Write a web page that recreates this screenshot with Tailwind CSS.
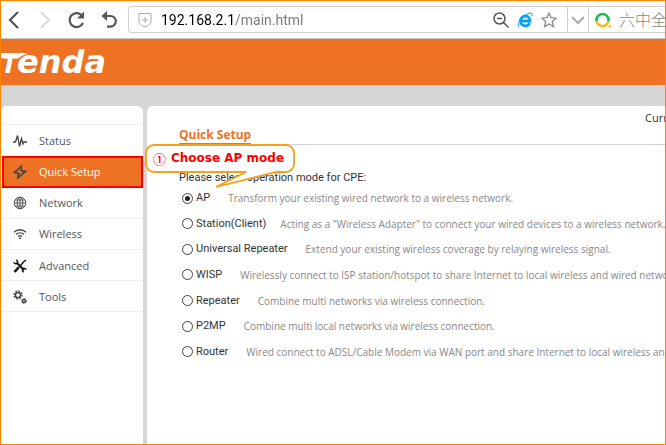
<!DOCTYPE html>
<html lang="en">
<head>
  <meta charset="UTF-8">
  <meta name="viewport" content="width=device-width, initial-scale=1.0">
  <title>Tenda - Quick Setup</title>
  <script src="https://cdn.jsdelivr.net/npm/@tailwindcss/browser@4"></script>
</head>
<body class="min-h-screen flex flex-col overflow-hidden border border-[#ff8400] bg-white font-['Open_Sans','Noto_Sans_CJK_SC',sans-serif] text-[#333]">

  <!-- Browser toolbar -->
  <div class="flex items-center h-[38px] shrink-0 overflow-hidden border-b border-[#c8c8c8] bg-white">
    <div class="flex items-center gap-[11px] pl-1 pr-2.5 shrink-0 text-[#555]">
      <button type="button" aria-label="Back">
        <svg class="size-5" viewBox="0 0 20 20" fill="none" stroke="currentColor" stroke-width="2.2"><path d="M13 2 5 10l8 8"/></svg>
      </button>
      <button type="button" aria-label="Forward" class="text-[#ddd]">
        <svg class="size-5" viewBox="0 0 20 20" fill="none" stroke="currentColor" stroke-width="2.2"><path d="M5 2l8 8-8 8"/></svg>
      </button>
      <button type="button" aria-label="Reload">
        <svg class="size-5" viewBox="0 0 20 20" fill="none" stroke="currentColor" stroke-width="2.2"><path d="M16 13A7 7 0 1 1 14.500 5"/><path d="M17 1.500v7h-7z" fill="currentColor" stroke="none"/></svg>
      </button>
      <button type="button" aria-label="Undo">
        <svg class="size-5" viewBox="0 0 20 20" fill="none" stroke="currentColor" stroke-width="2.2"><path d="M5 6h7.500a5.300 5.300 0 0 1 0 10.600H9"/><path d="M9 1v10L3.500 6z" fill="currentColor" stroke="none"/></svg>
      </button>
    </div>
    <div class="flex flex-1 min-w-0 items-center h-[27px] border border-r-0 border-[#d0d0d0] rounded-l-sm">
      <svg class="size-4 ml-2 shrink-0" viewBox="0 0 16 16" fill="none" stroke="#aaa"><path d="M2 1.500h12V9c0 3-3 5-6 6-3-1-6-3-6-6z"/><path d="M8 5v6M5 8h6"/></svg>
      <input type="text" aria-label="Address" value="192.168.2.1/main.html" class="flex-1 min-w-0 ml-2 text-sm font-['Roboto'] outline-none bg-[linear-gradient(90deg,#000_74px,#777_74px)] bg-clip-text text-transparent">
      <div class="flex items-center gap-2 pr-2.5 shrink-0">
        <button type="button" aria-label="Zoom out">
          <svg class="size-4" viewBox="0 0 16 16" fill="none" stroke="#555" stroke-width="1.5"><circle cx="6.500" cy="6.500" r="5.500"/><path d="M10.500 10.500l5 5M4 6.500h5"/></svg>
        </button>
        <button type="button" aria-label="Compatibility mode">
          <svg class="size-4" viewBox="0 0 16 16" fill="none" stroke="#0ba0ee"><path d="M3.500 9H13c0-3-2-5-4.700-5S3.500 6.200 3.500 9s2 4.800 4.800 4.800c2 0 3.600-.9 4.300-2.800" stroke-width="2.8"/><path d="M2.500 15C0 14 2 7.500 7 4c3.500-2.600 7.500-4 8-2.300.2.800 0 1.800-.4 2.500" stroke-width="1"/></svg>
        </button>
        <button type="button" aria-label="Bookmark">
          <svg class="size-4" viewBox="0 0 16 16" fill="none" stroke="#888" stroke-width="1.3"><path d="M8 1l2.100 4.700 5 .5-3.800 3.400 1.200 5.100L8 12l-4.500 2.700 1.200-5.100L.9 6.200l5-.5z"/></svg>
        </button>
      </div>
      <button type="button" aria-label="History" class="flex items-center justify-center w-[22px] h-full shrink-0 border-x border-[#d0d0d0]">
        <svg class="size-3" viewBox="0 0 12 12" fill="none" stroke="#aaa" stroke-width="2"><path d="M0 3l6 6 6-6"/></svg>
      </button>
      <div class="flex items-center w-[76px] shrink-0 gap-2 pl-1.5 overflow-hidden">
        <svg class="size-4 shrink-0" viewBox="0 0 16 16" fill="none" stroke-width="2.6"><path d="M1.700 9.500a6 6 0 1 1 11.600 0" stroke="#19b955"/><path d="M1.700 9.500a6 6 0 0 0 11.600 0" stroke="#fdb813"/><circle cx="14.800" cy="14.300" r="1.200" fill="#fdb813"/></svg>
        <span class="text-base leading-6 font-light whitespace-nowrap text-[#888]">六中全</span>
      </div>
    </div>
  </div>

  <!-- Logo bar -->
  <header class="flex items-center h-[46px] shrink-0 bg-[#ee7223] overflow-hidden">
    <a href="#" class="relative flex items-baseline text-white leading-none font-bold italic font-['DejaVu_Sans']">
      <svg class="absolute left-0 top-[7px] w-7 h-2" viewBox="0 0 28 8" fill="#fff"><path d="M0 0h22l5 1c-4 .5-7 2-9 4H0z"/></svg>
      <span class="w-4 text-2xl leading-none">T</span><span class="text-[32px] leading-none">enda</span>
    </a>
  </header>

  <div class="flex flex-1 gap-1 pt-[21px] bg-[#d6d6d6] overflow-hidden">
    <!-- Sidebar -->
    <nav class="w-[142px] shrink-0 bg-white rounded-t-md text-[11px] leading-4 text-[#555]">
      <div class="h-[19px] border-b border-[#eee]"></div>
      <a href="#" class="flex items-center gap-3 h-[31px] pl-3 pt-0.5 border-b border-[#eee]">
        <svg class="size-3.5" viewBox="0 0 14 14" fill="none" stroke="#444" stroke-width="1.3"><path d="M0 8h2.500L4.500 1.500l2 11 2-8L10 10l1-2h3"/></svg>
        Status
      </a>
      <a href="#" aria-current="page" class="flex items-center gap-3 h-8 ml-px pl-[9px] border-2 border-[#f00] bg-[#ee7223] text-white">
        <svg class="size-3.5" viewBox="0 0 14 14" fill="none" stroke="#444" stroke-width="1.7"><path d="M8.500 1L1.500 7.500l4.200.8-1 4.700L12.500 6.300 8 5.500z"/></svg>
        Quick Setup
      </a>
      <a href="#" class="flex items-center gap-3 h-[31px] pl-3 border-b border-[#eee]">
        <svg class="size-3.5" viewBox="0 0 14 14" fill="none" stroke="#555"><circle cx="7" cy="7" r="5.800"/><ellipse cx="7" cy="7" rx="2.800" ry="5.800"/><path d="M7 1v12M1 7h12M2 4h10M2 10h10"/></svg>
        Network
      </a>
      <a href="#" class="flex items-center gap-3 h-[31px] pl-3 border-b border-[#eee]">
        <svg class="size-3.5" viewBox="0 0 14 14" fill="none" stroke="#444" stroke-width="1.3"><path d="M1 5.200c3.500-3.300 8.500-3.300 12 0M3 7.500c2.300-2.200 5.700-2.200 8 0M5 9.600c1.200-1.100 2.800-1.100 4 0"/><circle cx="7" cy="11.300" r="1" fill="#444" stroke="none"/></svg>
        Wireless
      </a>
      <a href="#" class="flex items-center gap-3 h-[31px] pl-3 pt-0.5 border-b border-[#eee]">
        <svg class="size-3.5" viewBox="0 0 14 14" fill="none" stroke="#111"><path d="M3.500 3.500l7.500 7.500" stroke-width="2"/><path d="M.8 3.200c.6 1.600 2.500 2 3.400.8.9-1 .3-2.600-1-3.200M13.200 10.800c-.6-1.600-2.500-2-3.400-.8-.9 1-.3 2.600 1 3.200" stroke-width="1.4"/><path d="M13 1l-2.500 2L7.500 6.500" stroke-width="1.4"/><path d="M6 8l-4.500 5" stroke-width="2.6"/></svg>
        Advanced
      </a>
      <a href="#" class="flex items-center gap-3 h-[31px] pl-3 pt-0.5 border-b border-[#eee]">
        <svg class="size-3.5" viewBox="0 0 14 14" fill="none" stroke="#444"><circle cx="5" cy="5" r="2.600" stroke-width="1.5"/><circle cx="5" cy="5" r="4" stroke-width="1.4" stroke-dasharray="1.600 1.540"/><circle cx="11" cy="11" r="1.500" stroke-width="1.4"/><circle cx="11" cy="11" r="2.500" stroke-width="1" stroke-dasharray="1 .96"/></svg>
        Tools
      </a>
    </nav>

    <!-- Main panel -->
    <main class="flex-1 min-w-0 pl-8 bg-white rounded-tl-md overflow-hidden whitespace-nowrap">
      <div class="flex justify-end h-5 pt-1 overflow-hidden text-[11px] leading-4">
        <span class="w-5">Curr</span>
      </div>
      <div class="flex border-b border-[#d0d0d0]">
        <h1 class="-mb-px border-b-2 border-[#ee7223] text-xs leading-[17px] font-bold text-[#ee7223]">Quick Setup</h1>
      </div>

      <form class="font-['Roboto'] text-[11px] leading-5">
        <fieldset>
          <legend class="pt-[23px]">Please select operation mode for CPE:</legend>
          <div class="flex flex-col justify-between h-[174px] pl-[3px]">
            <div class="flex items-center">
              <label class="flex items-center gap-[3px] mr-[18px]">
                <input type="radio" name="mode" value="ap" checked class="appearance-none size-[11px] rounded-full border border-[#444] p-0.5 bg-clip-content checked:bg-[#222]">AP
              </label>
              <span class="font-['Open_Sans'] text-[10px] text-[#888]">Transform your existing wired network to a wireless network.</span>
            </div>
            <div class="flex items-center">
              <label class="flex items-center gap-[3px] mr-[14px]">
                <input type="radio" name="mode" value="station" class="appearance-none size-[11px] rounded-full border border-[#444] p-0.5 bg-clip-content checked:bg-[#222]">Station(Client)
              </label>
              <span class="font-['Open_Sans'] text-[10px] text-[#888]">Acting as a "Wireless Adapter" to connect your wired devices to a wireless network.</span>
            </div>
            <div class="flex items-center">
              <label class="flex items-center gap-[3px] mr-[18px]">
                <input type="radio" name="mode" value="universal" class="appearance-none size-[11px] rounded-full border border-[#444] p-0.5 bg-clip-content checked:bg-[#222]">Universal Repeater
              </label>
              <span class="font-['Open_Sans'] text-[10px] text-[#888]">Extend your existing wireless coverage by relaying wireless signal.</span>
            </div>
            <div class="flex items-center">
              <label class="flex items-center gap-[3px] mr-[18px]">
                <input type="radio" name="mode" value="wisp" class="appearance-none size-[11px] rounded-full border border-[#444] p-0.5 bg-clip-content checked:bg-[#222]">WISP
              </label>
              <span class="font-['Open_Sans'] text-[10px] text-[#888]">Wirelessly connect to ISP station/hotspot to share Internet to local wireless and wired network</span>
            </div>
            <div class="flex items-center">
              <label class="flex items-center gap-[3px] mr-[18px]">
                <input type="radio" name="mode" value="repeater" class="appearance-none size-[11px] rounded-full border border-[#444] p-0.5 bg-clip-content checked:bg-[#222]">Repeater
              </label>
              <span class="font-['Open_Sans'] text-[10px] text-[#888]">Combine multi networks via wireless connection.</span>
            </div>
            <div class="flex items-center">
              <label class="flex items-center gap-[3px] mr-[18px]">
                <input type="radio" name="mode" value="p2mp" class="appearance-none size-[11px] rounded-full border border-[#444] p-0.5 bg-clip-content checked:bg-[#222]">P2MP
              </label>
              <span class="font-['Open_Sans'] text-[10px] text-[#888]">Combine multi local networks via wireless connection.</span>
            </div>
            <div class="flex items-center">
              <label class="flex items-center gap-[3px] mr-[18px]">
                <input type="radio" name="mode" value="router" class="appearance-none size-[11px] rounded-full border border-[#444] p-0.5 bg-clip-content checked:bg-[#222]">Router
              </label>
              <span class="font-['Open_Sans'] text-[10px] text-[#888]">Wired connect to ADSL/Cable Modem via WAN port and share Internet to local wireless an</span>
            </div>
          </div>
        </fieldset>
      </form>
    </main>
  </div>

  <!-- Step callout -->
  <div class="absolute left-[145px] top-[144px] w-[151px] h-[45px]">
    <svg class="absolute inset-0 size-full" viewBox="0 0 151 45" fill="#fff" stroke="#f9a01b" stroke-width="1.8"><path d="M9 1h132a8 8 0 0 1 8 8v11a8 8 0 0 1-8 8h-10L71 43l30-15H9a8 8 0 0 1-8-8V9a8 8 0 0 1 8-8z"/></svg>
    <p class="relative flex items-center gap-[5px] pl-2 h-7 text-xs font-bold whitespace-nowrap text-[#f00] font-['DejaVu_Sans']">
      <span class="text-[13px] leading-none font-medium font-['Noto_Sans_CJK_SC']">①</span>Choose AP mode
    </p>
  </div>
</body>
</html>
